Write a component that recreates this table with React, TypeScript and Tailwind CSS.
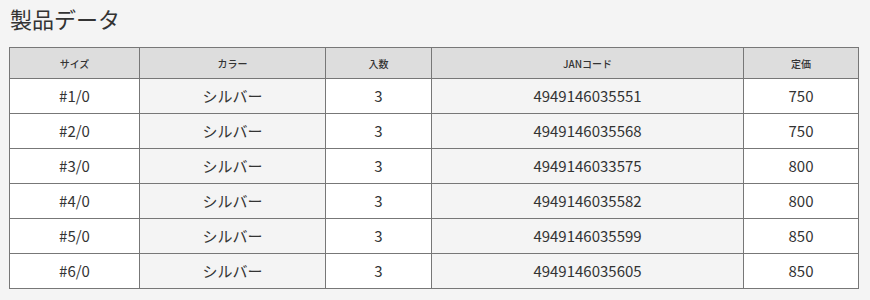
const rows = [
  { size: '#1/0', color: 'シルバー', qty: 3, jan: '4949146035551', price: 750 },
  { size: '#2/0', color: 'シルバー', qty: 3, jan: '4949146035568', price: 750 },
  { size: '#3/0', color: 'シルバー', qty: 3, jan: '4949146033575', price: 800 },
  { size: '#4/0', color: 'シルバー', qty: 3, jan: '4949146035582', price: 800 },
  { size: '#5/0', color: 'シルバー', qty: 3, jan: '4949146035599', price: 850 },
  { size: '#6/0', color: 'シルバー', qty: 3, jan: '4949146035605', price: 850 },
];

const headers = ['サイズ', 'カラー', '入数', 'JANコード', '定価'];
const widths = ['w-[130px]', 'w-[186px]', 'w-[106px]', 'w-[312px]', 'w-[115px]'];

export default function App() {
  return (
    <div
      className="w-[870px] h-[300px] bg-[#f4f4f4] text-[#333] px-[9px] pt-[2px]"
      style={{ fontFamily: '"Noto Sans CJK JP", "Noto Sans", sans-serif' }}
    >
      <h2 className="text-[22px] leading-[32px] pl-[1px] mb-[13px]">製品データ</h2>
      <table className="border-collapse table-fixed w-[850px] text-center">
        <thead>
          <tr className="h-[31px] bg-[#ddd]">
            {headers.map((h, i) => (
              <th key={h} className={`${widths[i]} border border-[#777] text-[10px] font-medium p-0`}>
                {h}
              </th>
            ))}
          </tr>
        </thead>
        <tbody>
          {rows.map((r) => (
            <tr key={r.jan} className="h-[35px] text-[15px]">
              <td className="border border-[#777] bg-white p-0">{r.size}</td>
              <td className="border border-[#777] bg-[#f4f4f4] p-0">{r.color}</td>
              <td className="border border-[#777] bg-white p-0">{r.qty}</td>
              <td className="border border-[#777] bg-[#f4f4f4] p-0">{r.jan}</td>
              <td className="border border-[#777] bg-white p-0">{r.price}</td>
            </tr>
          ))}
        </tbody>
      </table>
    </div>
  );
}
